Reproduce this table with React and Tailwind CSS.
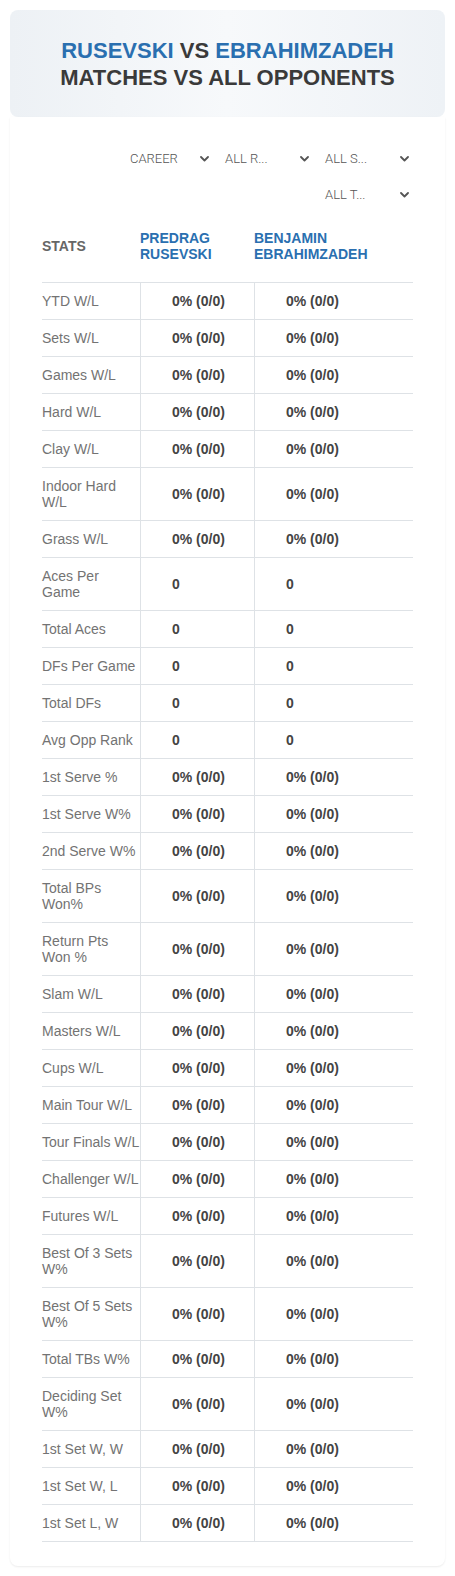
import React from "react";

const rows = [
  ["YTD W/L", "0% (0/0)"],
  ["Sets W/L", "0% (0/0)"],
  ["Games W/L", "0% (0/0)"],
  ["Hard W/L", "0% (0/0)"],
  ["Clay W/L", "0% (0/0)"],
  [["Indoor Hard", "W/L"], "0% (0/0)"],
  ["Grass W/L", "0% (0/0)"],
  [["Aces Per", "Game"], "0"],
  ["Total Aces", "0"],
  ["DFs Per Game", "0"],
  ["Total DFs", "0"],
  ["Avg Opp Rank", "0"],
  ["1st Serve %", "0% (0/0)"],
  ["1st Serve W%", "0% (0/0)"],
  ["2nd Serve W%", "0% (0/0)"],
  [["Total BPs", "Won%"], "0% (0/0)"],
  [["Return Pts", "Won %"], "0% (0/0)"],
  ["Slam W/L", "0% (0/0)"],
  ["Masters W/L", "0% (0/0)"],
  ["Cups W/L", "0% (0/0)"],
  ["Main Tour W/L", "0% (0/0)"],
  ["Tour Finals W/L", "0% (0/0)"],
  ["Challenger W/L", "0% (0/0)"],
  ["Futures W/L", "0% (0/0)"],
  [["Best Of 3 Sets", "W%"], "0% (0/0)"],
  [["Best Of 5 Sets", "W%"], "0% (0/0)"],
  ["Total TBs W%", "0% (0/0)"],
  [["Deciding Set", "W%"], "0% (0/0)"],
  ["1st Set W, W", "0% (0/0)"],
  ["1st Set W, L", "0% (0/0)"],
  ["1st Set L, W", "0% (0/0)"],
];

function Chevron() {
  return (
    <svg width="9" height="6" viewBox="0 0 9 6" className="shrink-0">
      <path d="M1 1 L4.5 4.5 L8 1" fill="none" stroke="#555" strokeWidth="1.8" strokeLinecap="round" strokeLinejoin="round" />
    </svg>
  );
}

function Select({ label, first }) {
  return (
    <div className={`flex h-[30px] w-[100px] items-center justify-between pr-[4px] ${first ? "pl-[17px]" : "pl-[12px]"}`}>
      <span className="text-[13px] font-light text-[#555] font-['Roboto',sans-serif]">{label}</span>
      <Chevron />
    </div>
  );
}

export default function App() {
  return (
    <div className="min-h-[1576px] bg-white pt-[10px] font-['Liberation_Sans',Arial,sans-serif]">
      <div className="mx-[10px]">
        <div className="h-[107px] rounded-[8px] bg-gradient-to-r from-[#edf1f5] via-[#f7f9fb] to-[#eef2f6] flex flex-col items-center justify-center">
          <div className="text-[22px] leading-[27px] font-bold text-[#3a3a3a]">
            <span className="text-[#2a6fb0]">RUSEVSKI</span> VS <span className="text-[#2a6fb0]">EBRAHIMZADEH</span>
          </div>
          <div className="text-[22px] leading-[27px] font-bold text-[#3a3a3a]">MATCHES VS ALL OPPONENTS</div>
        </div>
        <div className="rounded-b-[8px] bg-white shadow-[0_1px_2px_rgba(0,0,0,0.08)] px-[32px] pt-[27px] pb-[24px]">
          <div className="ml-auto flex w-[300px] flex-wrap justify-end gap-y-[6px]">
            <Select label="CAREER" first />
            <Select label="ALL R..." />
            <Select label="ALL S..." />
            <Select label="ALL T..." />
          </div>
          <div className="mt-[10px] text-[14px] leading-[16px]">
            <div className="grid grid-cols-[98px_114px_158px] border-b border-[#dee2e6] pt-[10px] pb-[20px] font-bold">
              <div className="self-center text-[#666]">STATS</div>
              <div className="text-[#2a6fb0]">PREDRAG<br />RUSEVSKI</div>
              <div className="text-[#2a6fb0]">BENJAMIN<br />EBRAHIMZADEH</div>
            </div>
            {rows.map(([label, val], i) => (
              <div key={i} className="grid grid-cols-[98px_114px_158px] border-b border-[#dee2e6]">
                <div className="py-[10px] text-[#737373] whitespace-nowrap">
                  {Array.isArray(label) ? (<>{label[0]}<br />{label[1]}</>) : label}
                </div>
                <div className="flex items-center border-l border-[#dee2e6] pl-[31px] font-bold text-[#444]">{val}</div>
                <div className="flex items-center border-l border-[#dee2e6] pl-[31px] font-bold text-[#444]">{val}</div>
              </div>
            ))}
          </div>
        </div>
      </div>
    </div>
  );
}
